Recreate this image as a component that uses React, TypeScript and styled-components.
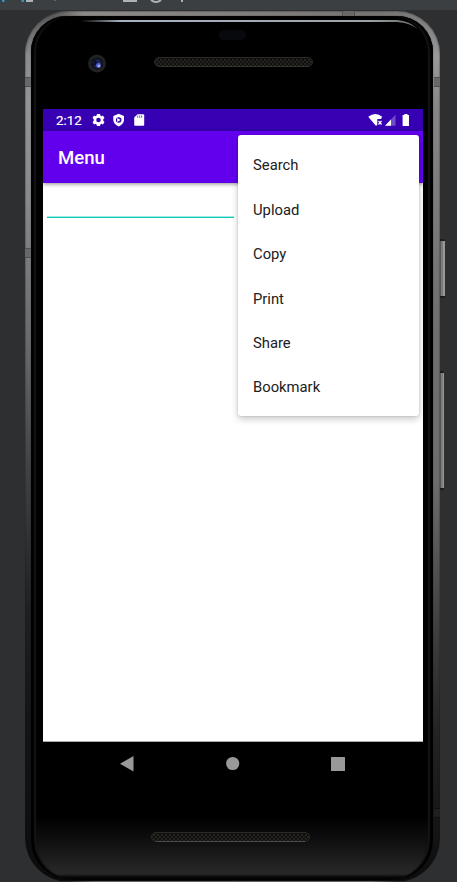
import React from "react";
import styled, { createGlobalStyle } from "styled-components";

const Global = createGlobalStyle`
  * { box-sizing: border-box; }
  html, body { margin: 0; padding: 0; background: #2d2f31; }
  body { font-family: Roboto, "Liberation Sans", sans-serif; overflow: hidden; }
`;

const Desktop = styled.main`
  width: 457px;
  height: 882px;
  overflow: hidden;
  display: flex;
  flex-direction: column;
  background: #2d2f31;
`;

const Toolbar = styled.header`
  height: 10px;
  flex: none;
  background: #3c3f41;
`;

const ToolbarArt = styled.svg`
  display: block;
`;

const Device = styled.section`
  position: relative;
  width: 415px;
  height: 871px;
  margin: 1px 0 0 25px;
  padding: 5px 7px 2px 6px;
  border-radius: 43px 43px 44px 44px;
  background:
    linear-gradient(90deg, transparent 30px, #777 70px, #777 345px, transparent 385px) bottom / 100% 1px no-repeat,
    linear-gradient(90deg, transparent 28px, #8d8a88 58px, #777473 350px, transparent 386px) top / 100% 5px no-repeat,
    linear-gradient(180deg, #555 0, #8c8c8c 45px, #959595 90px, #898989 190px, #686868 340px, #444 450px, #202020 600px, #151515 710px, #0c0c0c 100%) left / 50% 100% no-repeat,
    linear-gradient(180deg, #777 0, #999 45px, #858585 100px, #707070 300px, #6d6d6d 470px, #444 600px, #242424 720px, #0d0d0d 100%) right / 50% 100% no-repeat;
  box-shadow: inset 0 0 1px 1px rgba(20, 20, 20, 0.25);
`;

const Glass = styled.div`
  height: 100%;
  padding: 3px 10px 0 12px;
  border-radius: 36px 36px 40px 40px;
  display: flex;
  flex-direction: column;
  background: linear-gradient(180deg, #000 0 800px, #101010 826px, #232323 850px, #272727 858px, #111 860px, #030303 862px);
  box-shadow:
    0 0 1px 0 #121212,
    inset 3px 0 1px #000,
    inset -3px 0 1px #000,
    inset 5px 0 1px #141414,
    inset -5px 0 1px #141414;
`;

const TopBezel = styled.div`
  position: relative;
  height: 90px;
  flex: none;
`;

const BezelArt = styled.svg`
  position: absolute;
  left: -12px;
  top: -3px;
`;

const Sensor = styled.span`
  position: absolute;
  left: 176px;
  top: 11px;
  width: 27px;
  height: 10px;
  border-radius: 5px;
  background: #08090c;
`;

const Camera = styled.svg`
  position: absolute;
  left: 44px;
  top: 35px;
`;

const Grille = styled.svg<{ $bottom?: boolean }>`
  position: absolute;
  left: ${(p) => (p.$bottom ? 108 : 111)}px;
  top: ${(p) => (p.$bottom ? 90 : 38)}px;
`;

const Screen = styled.div`
  height: 633px;
  flex: none;
  display: flex;
  flex-direction: column;
  background: #fff;
  border-bottom: 1px solid #aaa;
  position: relative;
  overflow: hidden;
`;

const StatusBar = styled.div`
  height: 22px;
  flex: none;
  background: #3700b3;
  color: #fff;
  display: flex;
  align-items: center;
  padding: 0 12px 0 13px;
`;

const Clock = styled.span`
  width: 36px;
  padding-top: 2px;
  font-size: 13.3px;
  line-height: 20px;
  font-weight: 400;
  -webkit-text-stroke: 0.2px #fff;
`;

const StatusIcons = styled.svg`
  display: block;
  flex: none;
`;

const Spacer = styled.span`
  flex: 1;
`;

const AppBar = styled.div`
  height: 52px;
  flex: none;
  display: flex;
  align-items: center;
  padding: 2px 15px 0;
  background: #6200ee;
  color: #fff;
  box-shadow: 0 1px 4px rgba(0, 0, 0, 0.45);
`;

const Title = styled.h1`
  margin: 0;
  font-size: 18.6px;
  line-height: 24px;
  font-weight: 500;
`;

const Input = styled.div`
  width: 187px;
  height: 35px;
  margin-left: 3.5px;
  border-bottom: 1px solid #10cbb9;
  box-shadow: inset 0 -1px #9cece4;
`;

const Menu = styled.nav`
  position: absolute;
  left: 195px;
  top: 26px;
  width: 181.4px;
  height: 281px;
  padding: 8.2px 0;
  border-radius: 3px;
  background: #fff;
  box-shadow: 0 3px 7px rgba(0, 0, 0, 0.22), 0 0 2px rgba(0, 0, 0, 0.18);
`;

const MenuItem = styled.div`
  height: 44.4px;
  padding: 0 15px;
  display: flex;
  align-items: center;
  color: #202020;
  font-size: 14.8px;
  line-height: 20px;
`;

const NavBar = styled.div`
  position: relative;
  height: 120px;
  flex: none;
`;

const NavIcons = styled.svg`
  display: block;
`;

const Seam = styled.span<{ $x: number; $y: number; $across?: boolean; $dark?: boolean }>`
  position: absolute;
  left: ${(p) => p.$x}px;
  top: ${(p) => p.$y}px;
  width: ${(p) => (p.$across ? 13 : 6)}px;
  height: ${(p) => (p.$across ? 5 : 10)}px;
  background: ${(p) => (p.$dark ? "#202020" : "#686868")};
  border: solid ${(p) => (p.$dark ? "#0f0f0f" : "#505050")};
  border-width: ${(p) => (p.$across ? "0 1px" : "1px 0")};
`;

const SideKey = styled.span<{ $y: number; $h: number }>`
  position: absolute;
  left: 415px;
  top: ${(p) => p.$y}px;
  width: ${(p) => (p.$h > 80 ? 4 : 5)}px;
  height: ${(p) => p.$h}px;
  border: solid #1b1d1d;
  border-width: 2px 0;
  border-radius: 0 2px 2px 0;
  background: linear-gradient(90deg, #555 0 1px, #7c7c7c 1px 3px, #999 3px);
`;

const items = ["Search", "Upload", "Copy", "Print", "Share", "Bookmark"];

function SpeakerGrille({ bottom }: { bottom?: boolean }) {
  const id = bottom ? "mesh-bottom" : "mesh-top";
  return (
    <Grille $bottom={bottom} width="159" height="11" viewBox="0 0 159 11">
      <defs>
        <pattern id={id} width="4" height="4" patternUnits="userSpaceOnUse">
          <rect width="4" height="4" fill="#100f0d" />
          <path d="M1 0v2M3 2v2" stroke="#3c3933" />
        </pattern>
      </defs>
      <rect x=".5" y=".5" width="158" height="9" rx="4.5" fill={`url(#${id})`} stroke="#2c2b29" />
      <path d="M5 1.500h149" stroke="#11100e" />
      <path d="M5 9.500h149" stroke={bottom ? "#4c4b47" : "#353431"} />
    </Grille>
  );
}

export default function App() {
  return (
    <>
      <Global />
      <Desktop>
        <Toolbar>
          <ToolbarArt width="457" height="10">
            <path d="M2 0h3l-1 2H2zM21 0h3v2h-2z" fill="#3592c4" />
            <path d="M26 0h7v2h-7z" fill="#afb1b3" />
            <path d="M54 0h2v1h-2z" fill="#626669" />
            <path d="M123 0h14v2h-14z" fill="#afb1b3" />
            <path d="M151 0q5 4 10 0M182 0v2" fill="none" stroke="#afb1b3" strokeWidth="2" />
          </ToolbarArt>
        </Toolbar>
        <Device>
          <Seam $x={0} $y={66} />
          <Seam $x={0} $y={237} />
          <Seam $x={409} $y={66} />
          <Seam $x={409} $y={797} $dark />
          <Seam $x={317} $y={0} $across />
          <SideKey $y={228} $h={59} />
          <SideKey $y={360} $h={119} />
          <Glass>
            <TopBezel>
              <BezelArt width="402" height="40">
                <defs>
                  <linearGradient id="shine" x1="50" y1="0" x2="388" y2="0" gradientUnits="userSpaceOnUse">
                    <stop offset="0" stopColor="#b5bfd0" stopOpacity="0" />
                    <stop offset=".12" stopColor="#aab3c2" />
                    <stop offset=".85" stopColor="#9ca3a7" />
                    <stop offset="1" stopColor="#8c9693" stopOpacity=".7" />
                  </linearGradient>
                </defs>
                <path d="M50 4H366Q379 5 387 13Q379 7 366 6H50Z" fill="url(#shine)" />
              </BezelArt>
              <Sensor />
              <Camera width="20" height="20" viewBox="0 0 20 20">
                <circle cx="10" cy="9.500" r="9" fill="#222223" />
                <circle cx="10" cy="9.500" r="6" fill="#101116" />
                <circle cx="10" cy="9.500" r="4.500" fill="#182154" />
                <path d="M7 6l2 3-3 2" fill="none" stroke="#090e22" strokeWidth="2" />
                <circle cx="11.500" cy="11.500" r="2.400" fill="#5967ce" />
                <circle cx="12" cy="12" r="1.200" fill="#a3adfa" />
              </Camera>
              <SpeakerGrille />
            </TopBezel>
            <Screen>
              <StatusBar>
                <Clock>2:12</Clock>
                <StatusIcons width="54" height="14" viewBox="0 0 54 14" fill="#fff">
                  <path fillRule="evenodd" d="M5 1h3l.4 1.600 1.100.6L11 2.600l1.500 2.500-1.200 1v1.800l1.200 1-1.500 2.500-1.500-.6-1.100.6L8 13H5l-.4-1.600-1.100-.6-1.500.6L.5 8.900l1.200-1V6.100l-1.200-1L2 2.600l1.500.6 1.100-.6zm1.500 3.700a2.300 2.300 0 1 0 0 4.600 2.300 2.300 0 0 0 0-4.600z" />
                  <path fillRule="evenodd" d="M26.700.8L32 3v4c0 3-2.200 5.200-5.300 6.400C23.500 12.200 21.300 10 21.300 7V3zm0 3.400a2.800 2.800 0 1 0 0 5.600 2.800 2.800 0 0 0 0-5.600z" />
                  <path d="M25.200 5v4L28.500 7z" />
                  <path d="M45.500 1.200h5.700q1 0 1 1v9.600q0 1-1 1h-8q-1 0-1-1V4.500z" />
                  <path d="M45.700 2.500v2.300M47.700 2.500v2.300M49.700 2.500v2.300" stroke="#7650cb" />
                </StatusIcons>
                <Spacer />
                <StatusIcons width="44" height="14" viewBox="0 0 44 14" fill="#fff">
                  <path d="M1.200 3.700Q8.500-1.500 15.200 3.700L14 6H10.300v5.500l-1.200 1.500z" />
                  <path d="M11.500 8l3 3.500m0-3.500l-3 3.500" stroke="#fff" strokeWidth="1.200" />
                  <path d="M28.500 1.700v11H18z" fill="#704bca" />
                  <path d="M24 6.400v6.300h-6z" />
                  <path d="M37.300 1h3.200v1h1.500v10.500q0 .6-.6.6h-5.200q-.6 0-.6-.6V2h1.700z" />
                </StatusIcons>
              </StatusBar>
              <AppBar><Title>Menu</Title></AppBar>
              <Input />
              <Menu>
                {items.map((item) => <MenuItem key={item}>{item}</MenuItem>)}
              </Menu>
            </Screen>
            <NavBar>
              <NavIcons width="380" height="44" fill="#999">
                <path d="M77 21.800L90.500 14v15.500z" />
                <circle cx="189.700" cy="21.500" r="6.600" />
                <rect x="288" y="15" width="14" height="14" rx=".5" />
              </NavIcons>
              <SpeakerGrille bottom />
            </NavBar>
          </Glass>
        </Device>
      </Desktop>
    </>
  );
}
